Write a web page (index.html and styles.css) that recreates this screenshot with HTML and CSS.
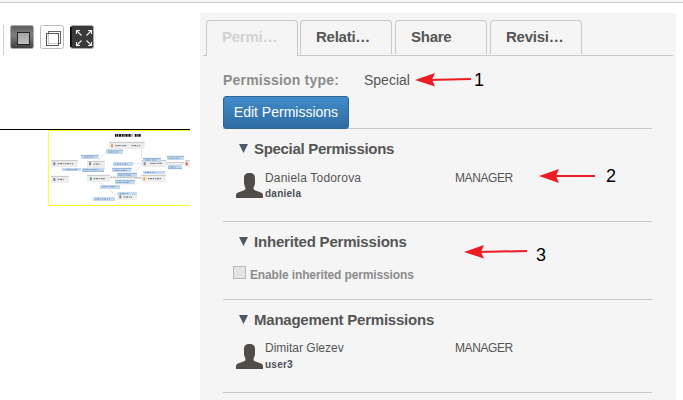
FILE: index.html
```html
<!DOCTYPE html>
<html lang="en">
<head>
<meta charset="utf-8">
<title>Permissions</title>
<link rel="stylesheet" href="styles.css">
</head>
<body>
<div class="topbar"></div>
<div class="layout">
  <div class="preview">
    <div class="toolbar">
      <svg class="tool" width="24" height="24" viewBox="0 0 24 24"><defs><linearGradient id="g1" x1="0" y1="0" x2="0" y2="1"><stop offset="0" stop-color="#5c5c5c"/><stop offset=".4" stop-color="#808080"/><stop offset="1" stop-color="#3e3e3e"/></linearGradient><linearGradient id="g2" x1="0" y1="0" x2="0" y2="1"><stop offset="0" stop-color="#a2a2a2"/><stop offset="1" stop-color="#c2c2c2"/></linearGradient></defs><rect x=".5" y=".5" width="23" height="23" rx="2" fill="url(#g1)" stroke="#aaa"/><rect x="7.5" y="7.5" width="12" height="12" fill="url(#g2)" stroke="#242424"/></svg>
      <svg class="tool" width="24" height="24" viewBox="0 0 24 24"><rect x=".5" y=".5" width="23" height="23" rx="2" fill="#fff" stroke="#bbb"/><rect x="8.5" y="6.5" width="12" height="12" fill="none" stroke="#666"/><rect x="6.500" y="8.500" width="12" height="12" fill="none" stroke="#555"/><path d="M8.500 9v9.500h9.500" fill="none" stroke="#ccc"/></svg>
      <svg class="tool" width="24" height="24" viewBox="0 0 24 24"><rect x=".5" y=".5" width="23" height="23" rx="2" fill="#3a3a3a" stroke="#aaa"/><path d="M1 2v20" stroke="#111" stroke-width="2"/><path d="M6.500 9V5.500H10M6.500 5.500l5 5M18 5.500h3.500V9M21.500 5.500l-5 5M6.500 17v3.500H10M6.500 20.500l5-5M18 20.500h3.500V17M21.500 20.500l-5-5" fill="none" stroke="#f2f2f2" stroke-width="1.100"/></svg>
    </div>
    <div class="canvas">
      <svg class="diagram" width="142" height="77" viewBox="9 15 426 231">
        <path d="M435 16.500H10.500v225H435" fill="none" stroke="#ffff29" stroke-width="3"/>
        <g fill="none" stroke="#c4c4c4" stroke-width="2"><path d="M200 65l-45 45M290 65v45M235 115h60M300 115l-45 35-65 6M362 118h58M195 158h95M270 160h20M160 168l55 45M180 132l-35-5" stroke-dasharray="7 3"/><path d="M195 158h98" stroke-width="3"/><path d="M362 113h56" stroke-width="3"/></g>
        <g fill="#ededed"><path d="M192 51h107v21H192zM18 106h80v20H18zM126 108h54v20h-54zM289 106h75v20h-75zM420 106h15v20h-15zM18 153h54v20H18zM126 150h68v20h-68zM289 150h74v20h-74zM216 205h60v19h-60z"/></g>
        <path d="M192 52h107M18 107h80M126 109h54M289 107h75M420 107h15M18 154h54M126 151h68M289 151h74M216 206h60" stroke="#c6c6c6" stroke-width="3"/>
        <g fill="#c4d9ed"><path d="M108 90h53v12h-53zM183 75h51v12h-51zM51 129h57v9H51zM111 129h66v11h-66zM204 111h60v12h-60zM201 129h59v12h-59zM294 99h54v11h-54zM366 93h51v12h-51zM369 120h42v12h-42zM216 144h60v12h-60zM210 165h60v13h-60zM294 138h66v9h-66zM165 180h60v12h-60zM144 216h66v12h-66zM219 201h57v9h-57z"/></g>
        <path d="M108 91h53M183 75h51M111 139h66M201 130h59M294 100h54M366 94h51M369 131h42M216 145h60M210 166h60" stroke="#779fcc" stroke-width="2"/>
        <g stroke="#6f93bd" stroke-width="3" stroke-dasharray="4 2 7 2 3 3"><path d="M118 96h28M190 81h30M62 134h34M115 134h45M210 117h38M206 136h40M300 105h35M371 100h32M371 126h22M220 150h40M215 172h40M300 142h28M172 185h39M150 222h45M224 206h25"/></g>
        <g stroke="#666" stroke-width="3" stroke-dasharray="4 2 7 2 3 3"><path d="M211 62h33M260 62h26M38 116h48M146 117h20M316 115h36M38 163h20M146 161h33M309 161h40M236 216h27"/></g>
        <path d="M210 31h52M269 31h19" stroke="#111" stroke-width="8" stroke-dasharray="5 1 3 2 7 2"/>
        <g fill="#888"><path d="M25 112h6v9h-6zM25 159h6v9h-6zM132 112h6v9h-6zM296 112h6v9h-6zM223 211h6v9h-6z"/></g>
        <path d="M198 58h6v9h-6zM295 157h6v9h-6z" fill="#e9a342"/><path d="M135 157h5v9h-5z" fill="#4aa36a"/><path d="M422 112h6v9h-6z" fill="#d75a4a"/>
      </svg>
    </div>
  </div>
  <main class="panel">
    <nav class="tabs">
      <span class="tab active">Permi…</span><span class="tab">Relati…</span><span class="tab">Share</span><span class="tab">Revisi…</span>
    </nav>
    <div class="content">
      <div class="type"><b>Permission type:</b><span>Special</span></div>
      <div class="actions"><button class="edit">Edit Permissions</button></div>
      <section class="special">
        <h2><i class="caret"></i><span class="t1">Special Permissions</span></h2>
        <div class="user"><svg class="avatar" width="27" height="25" viewBox="0 0 27 25"><path d="M13.500 0C9.500 0 8 2 8 5v5c0 2 1 3 1.500 5 0 1.500-.5 2-2 2.500L2 19.500C.5 20 0 21 0 22.500V25h27v-2.500c0-1.500-.5-2.500-2-3l-5.500-2c-1.500-.5-2-1-2-2.500.5-2 1.500-3 1.500-5V5c0-3-1.500-5-5.500-5z" fill="#504d48"/></svg><div class="names"><span class="n1">Daniela Todorova</span><b>daniela</b></div><span class="role">MANAGER</span></div>
      </section>
      <section class="inherited">
        <h2><i class="caret"></i><span class="t2">Inherited Permissions</span></h2>
        <div class="check"><i class="box"></i><b>Enable inherited permissions</b></div>
      </section>
      <section class="management">
        <h2><i class="caret"></i><span class="t3">Management Permissions</span></h2>
        <div class="user"><svg class="avatar" width="27" height="25" viewBox="0 0 27 25"><path d="M13.500 0C9.500 0 8 2 8 5v5c0 2 1 3 1.500 5 0 1.500-.5 2-2 2.500L2 19.500C.5 20 0 21 0 22.500V25h27v-2.500c0-1.500-.5-2.500-2-3l-5.500-2c-1.500-.5-2-1-2-2.500.5-2 1.500-3 1.500-5V5c0-3-1.500-5-5.500-5z" fill="#504d48"/></svg><div class="names"><span class="n2">Dimitar Glezev</span><b>user3</b></div><span class="role">MANAGER</span></div>
      </section>
    </div>
  </main>
</div>
<svg class="notes" width="683" height="400" viewBox="0 0 683 400">
  <g stroke="#ed1c24" stroke-width="2"><path d="M428 80l43-1M552 176h43M477 252l50-1"/></g>
  <g fill="#ed1c24"><path d="M415 80l20-7-3 6.500 3 7zM539 176l20-7-3 7 3 7zM464 252l20-7-3 7 3 6.500z"/></g>
  <g class="num"><text x="474" y="86">1</text><text x="606" y="182">2</text><text x="536" y="261">3</text></g>
</svg>
</body>
</html>
```
FILE: styles.css
```css
* { box-sizing: border-box; }
body { margin: 0; width: 683px; height: 400px; overflow: hidden; background: #fff; font-family: "Liberation Sans", Arial, sans-serif; color: #555; position: relative; }
.topbar { height: 3px; background: #f5f5f5; border-bottom: 1px solid #ccc; }
.layout { display: flex; height: 397px; }
.preview { width: 200px; padding-top: 22px; }
.toolbar { display: flex; gap: 6px; height: 30px; margin-left: 3px; border-left: 1px solid #ccc; padding-left: 6px; }
.tool { display: block; }
.canvas { width: 190px; margin-top: 74px; border-top: 1px solid #000; }
.diagram { display: block; margin-left: 48px; }
.panel { width: 476px; margin-top: 10px; padding: 7px 3px 0; background: #f5f5f5; }
.tabs { display: flex; gap: 3px; height: 36px; background: linear-gradient(#c8c8c8, #c8c8c8) left bottom / 100% 1px no-repeat; padding-left: 3px; }
.tab { flex: none; width: 92px; height: 34px; border: 1px solid #c8c8c8; border-bottom: 0; border-radius: 4px 4px 0 0; padding-left: 15px; font-size: 15px; font-weight: bold; line-height: 32px; letter-spacing: -.25px; }
.tab:nth-child(2) { margin-left: -1px; }
.tab.active { height: 36px; background: #f5f5f5; color: #d2d2d2; }
.content { padding: 15px 21px 0 20px; }
.type { display: flex; height: 25px; font-size: 14px; line-height: 18px; }
.type b { width: 141px; color: #8c8c8c; letter-spacing: .2px; }
.actions { height: 33px; border-bottom: 1px solid #c8c8c8; }
.edit { display: block; width: 126px; height: 33px; padding: 0 0 1px; border: 1px solid #2d6596; border-radius: 3px; background: linear-gradient(#428bca, #2d6ca2); color: #fff; font: 14px "Liberation Sans", Arial, sans-serif; }
section { border-bottom: 1px solid #c8c8c8; }
.special { height: 93px; }
.inherited { height: 78px; }
.management { height: 93px; }
h2 { display: flex; align-items: center; margin: 0; padding: 10px 0 1px 16px; height: 30px; font-size: 15px; line-height: 19px; }
.caret { width: 9px; height: 9px; margin-right: 6px; background: #4c5966; clip-path: polygon(0 0, 100% 0, 50% 100%); }
.t1 { letter-spacing: -.31px; }
.t2 { letter-spacing: -.19px; }
.t3 { letter-spacing: -.23px; }
.user { display: flex; padding: 11px 0 0 13px; font-size: 12px; }
.avatar { margin-top: 3px; }
.names { width: 192px; padding-left: 2px; }
.names span { display: block; line-height: 16px; }
.names .n1 { letter-spacing: .19px; }
.names b { display: block; font-size: 10px; line-height: 16px; letter-spacing: .25px; color: #4e4e58; }
.role { line-height: 16px; letter-spacing: -.4px; }
.management .user { padding-top: 10px; }
.management .avatar { margin-top: 4px; }
.management .names b { line-height: 18px; }
.check { display: flex; gap: 4px; padding: 14px 0 0 10px; font-size: 12px; line-height: 18px; letter-spacing: -.13px; color: #8c8c8c; }
.box { width: 13px; height: 13px; border: 1px solid #b8b8b8; background: #e4e4e4; }
.notes { position: absolute; left: 0; top: 0; pointer-events: none; }
.num { font: 18px "Liberation Sans", Arial, sans-serif; fill: #000; }
```
